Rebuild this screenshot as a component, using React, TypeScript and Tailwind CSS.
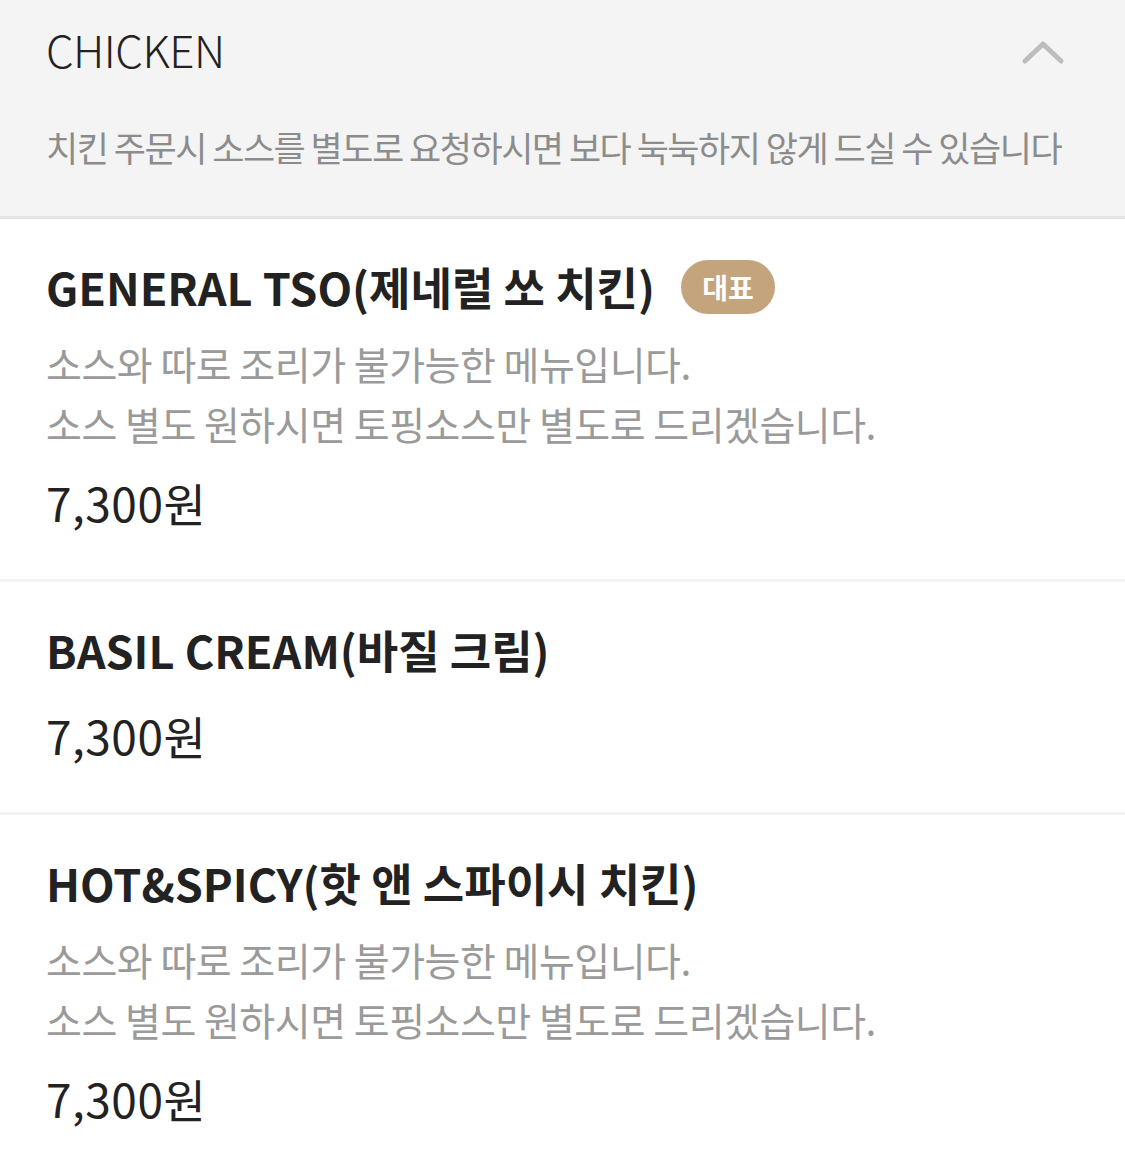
const font = { fontFamily: '"Noto Sans CJK KR", "Noto Sans", sans-serif' };

const items = [
  {
    name: "GENERAL TSO(제네럴 쏘 치킨)",
    badge: "대표",
    desc: ["소스와 따로 조리가 불가능한 메뉴입니다.", "소스 별도 원하시면 토핑소스만 별도로 드리겠습니다."],
    price: "7,300원",
  },
  {
    name: "BASIL CREAM(바질 크림)",
    desc: [],
    price: "7,300원",
  },
  {
    name: "HOT&SPICY(핫 앤 스파이시 치킨)",
    desc: ["소스와 따로 조리가 불가능한 메뉴입니다.", "소스 별도 원하시면 토핑소스만 별도로 드리겠습니다."],
    price: "7,300원",
  },
];

export default function App() {
  return (
    <div className="w-[1125px] min-h-[1172px] bg-white" style={font}>
      <div className="bg-[#f4f4f4] border-b-[3px] border-[#e4e4e4] px-[46px] pt-[16px] pb-[46px]">
        <div className="flex items-center justify-between h-[66px]">
          <h2 className="text-[44px] font-light text-[#222] tracking-[-0.5px]">CHICKEN</h2>
          <svg width="44" height="26" viewBox="0 0 44 26" className="mr-[14px] mt-[8px]">
            <path d="M4 21 L22 4 L40 21" fill="none" stroke="#bdbdbd" strokeWidth="5" strokeLinecap="round" strokeLinejoin="round" />
          </svg>
        </div>
        <p className="mt-[42px] text-[35px] leading-[46px] text-[#8c8c8c] tracking-[-1.5px] whitespace-nowrap">
          치킨 주문시 소스를 별도로 요청하시면 보다 눅눅하지 않게 드실 수 있습니다
        </p>
      </div>

      {items.map((item, i) => (
        <div
          key={i}
          className={`px-[46px] pt-[38px] pb-[47px] ${i < items.length - 1 ? "border-b-[3px] border-[#f3f3f3]" : ""}`}
        >
          <div className="flex items-center gap-[26px] h-[60px]">
            <h3 className="text-[45px] font-bold text-[#222] tracking-[0px] whitespace-nowrap">{item.name}</h3>
            {item.badge && (
              <span className="h-[54px] w-[94px] rounded-full bg-[#c4a47d] text-white text-[28px] font-bold flex items-center justify-center">
                {item.badge}
              </span>
            )}
          </div>
          {item.desc.length > 0 && (
            <div className="mt-[16px]">
              {item.desc.map((d, j) => (
                <p key={j} className="text-[39px] leading-[60px] text-[#9a9a9a] tracking-[-0.5px] whitespace-nowrap">
                  {d}
                </p>
              ))}
            </div>
          )}
          <p
            className={`${item.desc.length > 0 ? "mt-[19px]" : "mt-[25px]"} text-[46px] leading-[60px] text-[#222] tracking-[0.5px]`}
          >
            {item.price}
          </p>
        </div>
      ))}
    </div>
  );
}
